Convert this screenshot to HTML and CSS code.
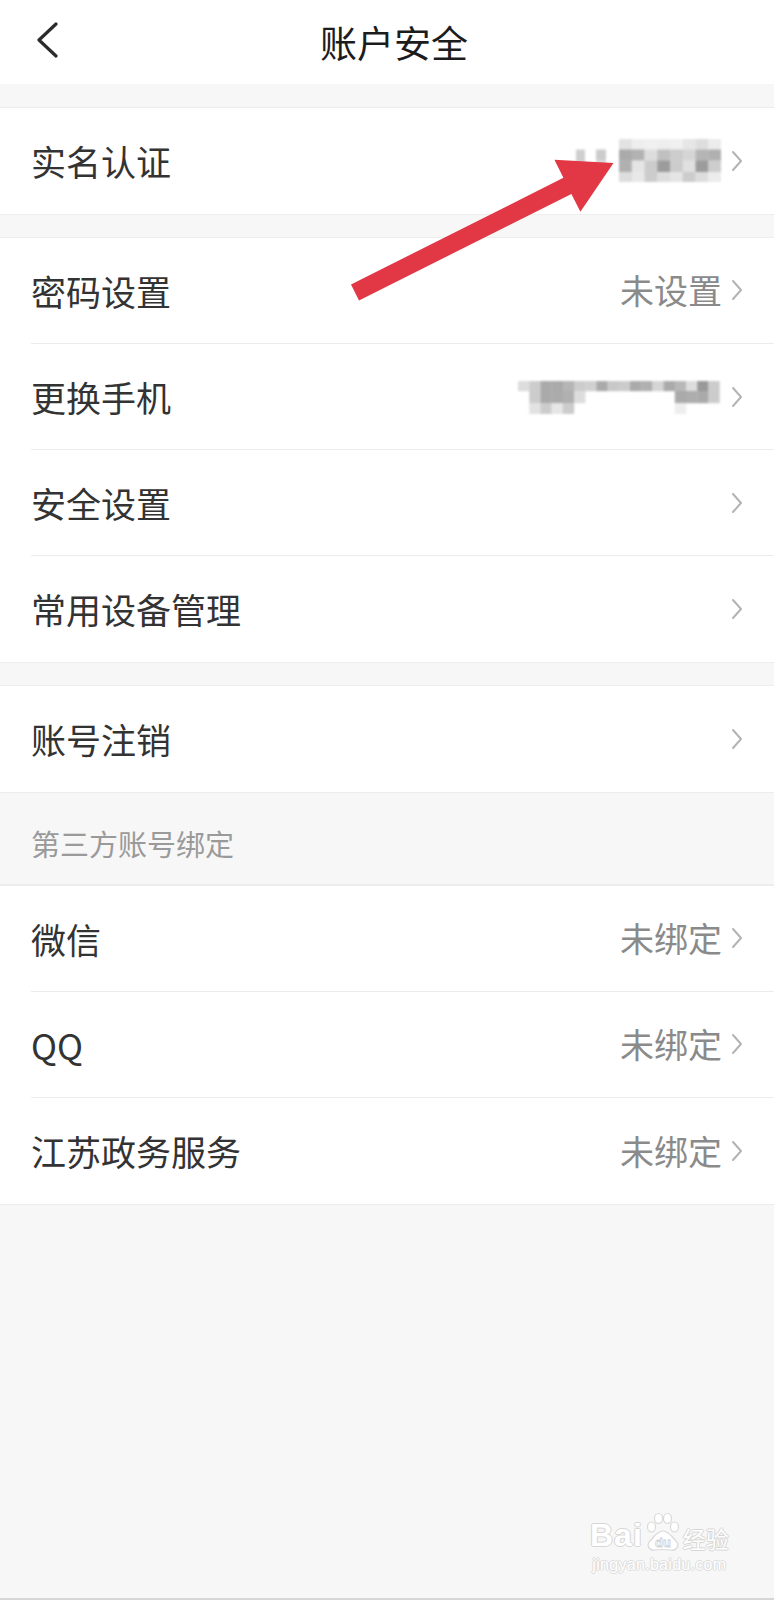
FILE: index.html
```html
<!DOCTYPE html>
<html lang="zh-CN">
<head>
<meta charset="utf-8">
<title>账户安全</title>
<link rel="stylesheet" href="styles.css">
</head>
<body>
<div class="page">
  <header class="nav">
    <span class="back">
      <svg class="back-icon" width="24" height="36" viewBox="0 0 24 36"><polyline points="20,2 3,18 20,34" fill="none" stroke="#2b2b2b" stroke-width="3.2" stroke-linecap="round" stroke-linejoin="round"/></svg>
    </span>
    <h1 class="title">账户安全</h1>
    <span></span>
  </header>

  <section class="group">
    <div class="row"><div class="row-inner">
      <span class="label">实名认证</span>
      <span class="value">
        <svg class="mosaic" width="148" height="45" viewBox="0 0 148 45">
          <rect x="2" y="10.5" width="9" height="22" fill="#cfcfcf"/>
          <rect x="22" y="10.5" width="10" height="11" fill="#cccccc"/>
          <rect x="22" y="21.5" width="10" height="11" fill="#d6d6d6"/>
          <rect x="45" y="0" width="13" height="10.8" fill="#e2e2e2"/><rect x="57.75" y="0" width="13" height="10.8" fill="#eeeeee"/><rect x="70.5" y="0" width="13" height="10.8" fill="#f0f0f0"/><rect x="83.25" y="0" width="13" height="10.8" fill="#eeeeee"/><rect x="96" y="0" width="13" height="10.8" fill="#f0f0f0"/><rect x="108.75" y="0" width="13" height="10.8" fill="#e6e6e6"/><rect x="121.5" y="0" width="13" height="10.8" fill="#dddddd"/><rect x="134.25" y="0" width="12.75" height="10.8" fill="#ececec"/>
          <rect x="45" y="10.5" width="13" height="11.3" fill="#aaaaaa"/><rect x="57.75" y="10.5" width="13" height="11.3" fill="#b2b2b2"/><rect x="70.5" y="10.5" width="13" height="11.3" fill="#dddddd"/><rect x="83.25" y="10.5" width="13" height="11.3" fill="#c0c0c0"/><rect x="96" y="10.5" width="13" height="11.3" fill="#cccccc"/><rect x="108.75" y="10.5" width="13" height="11.3" fill="#d5d5d5"/><rect x="121.5" y="10.5" width="13" height="11.3" fill="#b5b5b5"/><rect x="134.25" y="10.5" width="12.75" height="11.3" fill="#b0b0b0"/>
          <rect x="45" y="21.5" width="13" height="11.8" fill="#b0b0b0"/><rect x="57.75" y="21.5" width="13" height="11.8" fill="#e5e5e5"/><rect x="70.5" y="21.5" width="13" height="11.8" fill="#cccccc"/><rect x="83.25" y="21.5" width="13" height="11.8" fill="#9c9c9c"/><rect x="96" y="21.5" width="13" height="11.8" fill="#cccccc"/><rect x="108.75" y="21.5" width="13" height="11.8" fill="#e0e0e0"/><rect x="121.5" y="21.5" width="13" height="11.8" fill="#9c9c9c"/><rect x="134.25" y="21.5" width="12.75" height="11.8" fill="#cdcdcd"/>
          <rect x="45" y="33" width="13" height="10" fill="#dddddd"/><rect x="57.75" y="33" width="13" height="10" fill="#e8e8e8"/><rect x="70.5" y="33" width="13" height="10" fill="#cccccc"/><rect x="83.25" y="33" width="13" height="10" fill="#dddddd"/><rect x="96" y="33" width="13" height="10" fill="#e5e5e5"/><rect x="108.75" y="33" width="13" height="10" fill="#cccccc"/><rect x="121.5" y="33" width="13" height="10" fill="#dddddd"/><rect x="134.25" y="33" width="12.75" height="10" fill="#ececec"/>
        </svg>
        <svg class="chev" width="12" height="22" viewBox="0 0 12 22"><polyline points="2,2 10,11 2,20" fill="none" stroke="#b3b3b3" stroke-width="2" stroke-linecap="round" stroke-linejoin="round"/></svg>
      </span>
    </div></div>
  </section>

  <section class="group">
    <div class="row"><div class="row-inner">
      <span class="label">密码设置</span>
      <span class="value">未设置<svg class="chev" width="12" height="22" viewBox="0 0 12 22"><polyline points="2,2 10,11 2,20" fill="none" stroke="#b3b3b3" stroke-width="2" stroke-linecap="round" stroke-linejoin="round"/></svg></span>
    </div></div>
    <div class="row"><div class="row-inner">
      <span class="label">更换手机</span>
      <span class="value">
        <svg class="mosaic" width="206" height="36" viewBox="0 0 206 36">
          <rect x="2" y="2" width="11.4" height="10.2" fill="#dddddd"/><rect x="13.2" y="2" width="11.4" height="10.2" fill="#cccccc"/><rect x="24.4" y="2" width="11.4" height="10.2" fill="#aaaaaa"/><rect x="35.6" y="2" width="11.4" height="10.2" fill="#aaaaaa"/><rect x="46.8" y="2" width="11.4" height="10.2" fill="#b5b5b5"/><rect x="58" y="2" width="11.4" height="10.2" fill="#cccccc"/><rect x="69.2" y="2" width="11.4" height="10.2" fill="#d0d0d0"/><rect x="80.4" y="2" width="11.4" height="10.2" fill="#aaaaaa"/><rect x="91.6" y="2" width="11.4" height="10.2" fill="#c8c8c8"/><rect x="102.8" y="2" width="11.4" height="10.2" fill="#cccccc"/><rect x="114" y="2" width="11.4" height="10.2" fill="#aaaaaa"/><rect x="125.2" y="2" width="11.4" height="10.2" fill="#b0b0b0"/><rect x="136.4" y="2" width="11.4" height="10.2" fill="#d5d5d5"/><rect x="147.6" y="2" width="11.4" height="10.2" fill="#aaaaaa"/><rect x="158.8" y="2" width="11.4" height="10.2" fill="#b8b8b8"/><rect x="170" y="2" width="11.4" height="10.2" fill="#dddddd"/><rect x="181.2" y="2" width="11.4" height="10.2" fill="#999999"/><rect x="192.4" y="2" width="11.4" height="10.2" fill="#cccccc"/>
          <rect x="13.2" y="12" width="11.4" height="12.2" fill="#cccccc"/><rect x="24.4" y="12" width="11.4" height="12.2" fill="#aaaaaa"/><rect x="35.6" y="12" width="11.4" height="12.2" fill="#ababab"/><rect x="46.8" y="12" width="11.4" height="12.2" fill="#b0b0b0"/><rect x="58" y="12" width="11.4" height="12.2" fill="#dddddd"/><rect x="158.8" y="12" width="11.4" height="12.2" fill="#aaaaaa"/><rect x="170" y="12" width="11.4" height="12.2" fill="#adadad"/><rect x="181.2" y="12" width="11.4" height="12.2" fill="#aaaaaa"/><rect x="192.4" y="12" width="11.4" height="12.2" fill="#cccccc"/>
          <rect x="13.2" y="24" width="11.4" height="11" fill="#e2e2e2"/><rect x="24.4" y="24" width="11.4" height="11" fill="#cccccc"/><rect x="35.6" y="24" width="11.4" height="11" fill="#e6e6e6"/><rect x="46.8" y="24" width="11.4" height="11" fill="#cccccc"/><rect x="158.8" y="24" width="11.4" height="11" fill="#eeeeee"/>
        </svg>
        <svg class="chev" width="12" height="22" viewBox="0 0 12 22"><polyline points="2,2 10,11 2,20" fill="none" stroke="#b3b3b3" stroke-width="2" stroke-linecap="round" stroke-linejoin="round"/></svg>
      </span>
    </div></div>
    <div class="row"><div class="row-inner">
      <span class="label">安全设置</span>
      <span class="value"><svg class="chev" width="12" height="22" viewBox="0 0 12 22"><polyline points="2,2 10,11 2,20" fill="none" stroke="#b3b3b3" stroke-width="2" stroke-linecap="round" stroke-linejoin="round"/></svg></span>
    </div></div>
    <div class="row"><div class="row-inner">
      <span class="label">常用设备管理</span>
      <span class="value"><svg class="chev" width="12" height="22" viewBox="0 0 12 22"><polyline points="2,2 10,11 2,20" fill="none" stroke="#b3b3b3" stroke-width="2" stroke-linecap="round" stroke-linejoin="round"/></svg></span>
    </div></div>
  </section>

  <section class="group">
    <div class="row"><div class="row-inner">
      <span class="label">账号注销</span>
      <span class="value"><svg class="chev" width="12" height="22" viewBox="0 0 12 22"><polyline points="2,2 10,11 2,20" fill="none" stroke="#b3b3b3" stroke-width="2" stroke-linecap="round" stroke-linejoin="round"/></svg></span>
    </div></div>
  </section>

  <div class="section-title">第三方账号绑定</div>

  <section class="group group-flush">
    <div class="row"><div class="row-inner">
      <span class="label">微信</span>
      <span class="value">未绑定<svg class="chev" width="12" height="22" viewBox="0 0 12 22"><polyline points="2,2 10,11 2,20" fill="none" stroke="#b3b3b3" stroke-width="2" stroke-linecap="round" stroke-linejoin="round"/></svg></span>
    </div></div>
    <div class="row"><div class="row-inner">
      <span class="label">QQ</span>
      <span class="value">未绑定<svg class="chev" width="12" height="22" viewBox="0 0 12 22"><polyline points="2,2 10,11 2,20" fill="none" stroke="#b3b3b3" stroke-width="2" stroke-linecap="round" stroke-linejoin="round"/></svg></span>
    </div></div>
    <div class="row"><div class="row-inner">
      <span class="label">江苏政务服务</span>
      <span class="value">未绑定<svg class="chev" width="12" height="22" viewBox="0 0 12 22"><polyline points="2,2 10,11 2,20" fill="none" stroke="#b3b3b3" stroke-width="2" stroke-linecap="round" stroke-linejoin="round"/></svg></span>
    </div></div>
  </section>

  <svg class="arrow" width="774" height="320" viewBox="0 0 774 320">
    <polygon points="351,284.5 563.4,177.8 554.4,159.8 613.5,163 580.4,211.8 571.4,193.9 359,300.5" fill="#e23744"/>
  </svg>

  <div class="watermark">
    <div class="wm-top">
      <span class="wm-bai">Bai</span>
      <svg class="paw" width="38" height="40" viewBox="0 0 38 40">
        <g fill="#ffffff" stroke="#d9d9d9" stroke-width="1.2">
          <ellipse cx="7.5" cy="15" rx="4" ry="5"/>
          <ellipse cx="14.5" cy="6.5" rx="4" ry="5"/>
          <ellipse cx="23.5" cy="6.5" rx="4" ry="5"/>
          <ellipse cx="30.5" cy="15" rx="4" ry="5"/>
          <path d="M19 19 C 25 19, 28 25, 32 29 C 36 33, 33 39, 27 38 C 23 37.5, 15 37.5, 11 38 C 5 39, 2 33, 6 29 C 10 25, 13 19, 19 19 Z"/>
        </g>
        <text x="19" y="35" text-anchor="middle" font-family="Liberation Sans, sans-serif" font-size="13" font-weight="700" fill="#ffffff" stroke="#cfcfcf" stroke-width="0.8">du</text>
      </svg>
      <span class="wm-jy">经验</span>
    </div>
    <div class="wm-url">jingyan.baidu.com</div>
  </div>
</div>
</body>
</html>
```

FILE: styles.css
```css
html, body {
  margin: 0;
  padding: 0;
}

body {
  background: #f7f7f7;
  font-family: "Noto Sans CJK SC", "Noto Sans", sans-serif;
}

.page {
  position: relative;
  width: 774px;
  height: 1600px;
  box-sizing: border-box;
  border-bottom: 2px solid #d6d6d6;
  overflow: hidden;
  background: #f7f7f7;
}

.nav {
  height: 84px;
  background: #ffffff;
  display: grid;
  grid-template-columns: 1fr auto 1fr;
  align-items: center;
}

.back {
  padding-left: 36px;
  display: flex;
  align-items: center;
}

.back-icon {
  margin-bottom: 5px;
}

.title {
  margin: 0;
  padding-left: 14px;
  font-size: 37px;
  font-weight: 400;
  line-height: 1.2;
  color: #1c1c1c;
}

.group {
  background: #ffffff;
  margin-top: 22px;
  border-top: 1px solid #ededed;
  border-bottom: 1px solid #ededed;
}

.group:first-of-type {
  margin-top: 23px;
}

.group-flush {
  margin-top: 0;
}

.row {
  padding-left: 31px;
}

.row-inner {
  height: 106px;
  box-sizing: border-box;
  display: flex;
  align-items: center;
  justify-content: space-between;
  padding-right: 31px;
  border-bottom: 1px solid #ececec;
}

.row:last-child .row-inner {
  border-bottom: none;
}

.label {
  font-size: 35px;
  line-height: 1.2;
  color: #333333;
}

.value {
  display: flex;
  align-items: center;
  gap: 9px;
  font-size: 34px;
  line-height: 1.2;
  color: #8a8a8a;
}

.chev {
  display: block;
  flex: none;
}

.mosaic {
  display: block;
  filter: blur(0.8px);
}

.section-title {
  height: 92px;
  box-sizing: border-box;
  padding: 10px 0 0 31px;
  display: flex;
  align-items: center;
  font-size: 29px;
  line-height: 1.2;
  color: #9a9a9a;
  border-bottom: 1px solid #ededed;
}

.arrow {
  position: absolute;
  left: 0;
  top: 0;
  pointer-events: none;
}

.watermark {
  position: absolute;
  left: 590px;
  top: 1512px;
  display: flex;
  flex-direction: column;
  align-items: center;
  color: #ffffff;
}

.wm-top {
  display: flex;
  align-items: flex-end;
}

.wm-bai {
  font-family: "Liberation Sans", Arial, sans-serif;
  font-weight: 700;
  font-size: 32px;
  letter-spacing: 1px;
  line-height: 1;
  color: #ffffff;
  text-shadow: 1px 0 0 #d6d6d6, -1px 0 0 #d6d6d6, 0 1px 0 #d6d6d6, 0 -1px 0 #d6d6d6;
  margin-bottom: 1px;
}

.paw {
  display: block;
  margin: 0 1px;
}

.wm-jy {
  font-family: "Noto Sans CJK SC", sans-serif;
  font-size: 23px;
  line-height: 1;
  color: #ffffff;
  text-shadow: 1px 0 0 #d6d6d6, -1px 0 0 #d6d6d6, 0 1px 0 #d6d6d6, 0 -1px 0 #d6d6d6;
  margin-bottom: 2px;
}

.wm-url {
  margin-top: 4px;
  font-family: "Liberation Sans", Arial, sans-serif;
  font-size: 16px;
  line-height: 1.1;
  letter-spacing: 0.3px;
  color: #ffffff;
  text-shadow: 1px 0 0 #dddddd, -1px 0 0 #dddddd, 0 1px 0 #dddddd, 0 -1px 0 #dddddd;
}
```
